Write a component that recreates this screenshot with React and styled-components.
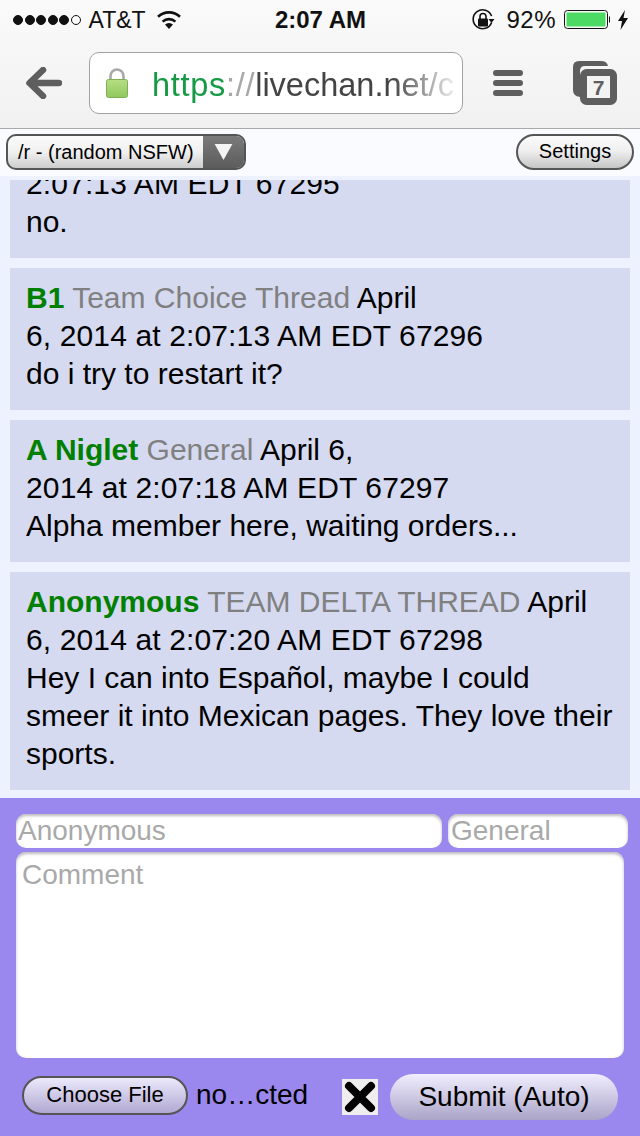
import React from "react";
import styled, { createGlobalStyle } from "styled-components";

const Global = createGlobalStyle`
  html, body { margin: 0; padding: 0; background: #eef2ff; }
  body { font-family: "Liberation Sans", Arial, sans-serif; color: #000; }
  * { box-sizing: border-box; }
`;
const Page = styled.div`
  width: 640px; height: 1136px; display: flex; flex-direction: column; overflow: hidden;
`;
const Chrome = styled.header`
  height: 129px; flex: none; background: linear-gradient(#fafafa, #f1f1f1);
  border-bottom: 1px solid #a9a9a9; display: flex; flex-direction: column;
`;
const StatusBar = styled.div`
  height: 40px; flex: none; display: grid; grid-template-columns: 1fr auto 1fr; align-items: center;
  padding: 0 12px 0 13px; font-size: 23px; color: #111;
`;
const StatusLeft = styled.div`display: flex; align-items: center;`;
const StatusRight = styled.div`display: flex; align-items: center; justify-content: flex-end;`;
const Dots = styled.div`display: flex; gap: 1.5px; margin-right: 8px;`;
const Dot = styled.span`
  width: 10px; height: 10px; border-radius: 50%; background: ${p => p.$on ? "#111" : "transparent"}; border: 1px solid #111;
`;
const Clock = styled.div`font-weight: 700; font-size: 24px;`;
const Percent = styled.span`font-size: 24px; letter-spacing: 0.5px; margin: 0 8px 0 11px;`;
const NavBar = styled.div`
  flex: 1; display: flex; align-items: center; padding: 0 23px 2px 26px;
`;
const UrlBox = styled.div`
  width: 374px; height: 62px; margin-left: 27px; margin-right: 30px; flex: none;
  background: #fff; border: 1px solid #a2a2a2; border-radius: 10px;
  display: flex; align-items: center; padding-left: 16px; overflow: hidden;
`;
const UrlText = styled.div`
  margin: 3px 0 0 24px; font-size: 32.5px; white-space: nowrap; color: #444;
  width: 308px; overflow: hidden; line-height: 40px;
  -webkit-mask-image: linear-gradient(to right, #000 78%, rgba(0,0,0,.1) 98%);
  mask-image: linear-gradient(to right, #000 78%, rgba(0,0,0,.1) 98%);
`;
const Scheme = styled.span`color: #169a45; letter-spacing: 0.7px;`;
const Slashes = styled.span`color: #a8a8a8; letter-spacing: 0.7px;`;
const TabSlot = styled.div`margin-left: 50px; display: flex; flex: none;`;
const TopBar = styled.div`
  height: 47px; flex: none; background: #f9fbff; display: flex; align-items: center;
  justify-content: space-between; padding: 0 6px 1px;
`;
const Select = styled.div`
  width: 240px; height: 36px; border: 2px solid #555; border-radius: 10px; display: flex; overflow: hidden;
  background: linear-gradient(#fbfbfb, #f0f0f0 50%, #cdcdcd);
  font-size: 20px;
`;
const SelectLabel = styled.div`flex: 1; padding-left: 10px; line-height: 32px; white-space: nowrap;`;
const SelectArrow = styled.div`
  width: 41px; display: flex; align-items: center; justify-content: center;
  background: linear-gradient(#7b7b7b, #5c5c5c);
`;
const SettingsBtn = styled.button`
  width: 118px; height: 36px; border: 2px solid #555; border-radius: 18px; padding: 0 0 2px;
  background: linear-gradient(#fbfbfb, #f0f0f0 45%, #c6c6c6); color: #000;
  font: 20px "Liberation Sans", Arial, sans-serif;
`;
const Chat = styled.main`
  flex: 1; min-height: 0; display: flex; background: #eef2ff; padding: 4px 10px 8px;
`;
const Scroller = styled.div`
  flex: 1; overflow: hidden; display: flex; flex-direction: column; justify-content: flex-end; gap: 10px;
`;
const Post = styled.article`
  flex: none; background: #d6daf0; padding: 11px 16px 17px; font-size: 30px; line-height: 38px;
`;
const Name = styled.b`color: #008000;`;
const Topic = styled.span`color: #808080;`;
const Stamp = styled.span`letter-spacing: 0.13px;`;
const Form = styled.form`
  height: 338px; flex: none; background: #9a88ee; padding: 16px 12px 0 16px; margin: 0;
  display: flex; flex-direction: column;
`;
const NameRow = styled.div`display: flex; gap: 6px;`;
const Field = styled.input`
  height: 34px; border: 0; outline: 0; border-radius: 10px; background: #fff; padding: 0 2px 0 ${p => p.$inset}px;
  font: 28px "Liberation Sans", Arial, sans-serif; box-shadow: inset 0 2px 3px #bbb;
  width: ${p => p.$w}px; flex: none; min-width: 0;
  &::placeholder { color: #a9a9a9; opacity: 1; }
`;
const Comment = styled.textarea`
  display: block; width: 608px; height: 206px; margin-top: 4px; border: 0; outline: 0; resize: none;
  border-radius: 10px; background: #fff; padding: 6px; box-shadow: inset 0 2px 3px #bbb;
  font: 28px/34px "Liberation Sans", Arial, sans-serif;
  &::placeholder { color: #a9a9a9; opacity: 1; }
`;
const Actions = styled.div`display: flex; align-items: center; margin-top: 16px; padding-left: 6px;`;
const ChooseFile = styled.button`
  width: 166px; height: 39px; border: 2px solid #555; border-radius: 20px; padding: 0; color: #000;
  margin-top: -4px;
  background: linear-gradient(#ece9fb, #b0a8d2); font: 22px "Liberation Sans", Arial, sans-serif;
`;
const FileName = styled.span`font-size: 28px; margin-left: 8px; width: 146px; margin-top: -4px;`;
const Check = styled.div`
  width: 36px; height: 36px; background: #eee; display: flex; align-items: center; justify-content: center; flex: none;
`;
const Submit = styled.button`
  width: 228px; height: 46px; margin-left: 12px; border: 0; border-radius: 23px; padding: 0; color: #000;
  background: linear-gradient(#f1eefe, #aaa4c8); font: 28px "Liberation Sans", Arial, sans-serif;
`;

const Wifi = () => (
  <svg width="26" height="20" viewBox="0 0 26 20" style={{ marginLeft: 10 }}>
    <path d="M13 19 L9 14.6 A6 6 0 0 1 17 14.6 Z" fill="#111" />
    <path d="M6.6 11.6 A9.6 9.6 0 0 1 19.4 11.6" fill="none" stroke="#111" strokeWidth="2.6" />
    <path d="M2 6.8 A16 16 0 0 1 24 6.8" fill="none" stroke="#111" strokeWidth="2.6" />
  </svg>
);
const RotationLock = () => (
  <svg width="24" height="24" viewBox="0 0 24 24">
    <path d="M20.6 14.5 A9.5 9.5 0 1 1 20.6 8" fill="none" stroke="#111" strokeWidth="1.6" />
    <path d="M17.5 11 L23.5 11 L20.5 15 Z" fill="#111" />
    <rect x="7" y="10.5" width="10" height="8" rx="1" fill="#111" />
    <path d="M9 11 V8.5 A3 3 0 0 1 15 8.5 V11" fill="none" stroke="#111" strokeWidth="1.6" />
  </svg>
);
const Battery = () => (
  <svg width="46" height="20" viewBox="0 0 46 20">
    <rect x="0.5" y="0.5" width="43" height="18" rx="3" fill="none" stroke="#111" />
    <rect x="2.5" y="2.5" width="39" height="14" rx="1" fill="#4cd964" />
    <path d="M45 6 L46 7 V12 L45 13 Z" fill="#111" />
  </svg>
);
const Bolt = () => (
  <svg width="10" height="20" viewBox="0 0 10 20" style={{ marginLeft: 8 }}>
    <path d="M7 0 L0 11 H4 L2.5 20 L10 8 H5.5 Z" fill="#111" />
  </svg>
);
const BackArrow = () => (
  <svg width="36" height="32" viewBox="0 0 36 32" style={{ flex: "none" }}>
    <path d="M17 3 L3.5 16 L17 29 M5 16 H33" fill="none" stroke="#5e5e5e" strokeWidth="6.5" strokeLinecap="round" strokeLinejoin="round" />
  </svg>
);
const Lock = () => (
  <svg width="22" height="30" viewBox="0 0 22 30" style={{ flex: "none" }}>
    <defs>
      <linearGradient id="lockg" x1="0" y1="0" x2="0" y2="1">
        <stop offset="0" stopColor="#b7de83" />
        <stop offset="1" stopColor="#8fc85e" />
      </linearGradient>
    </defs>
    <path d="M4.5 13 V8 A6.5 6.5 0 0 1 17.5 8 V13" fill="none" stroke="#a8a8a8" strokeWidth="2.6" />
    <rect x="0.5" y="11.5" width="21" height="18" rx="2" fill="url(#lockg)" stroke="#7fae55" />
  </svg>
);
const Menu = () => (
  <svg width="30" height="26" viewBox="0 0 30 26" style={{ flex: "none" }}>
    <rect x="0" y="0" width="30" height="6" rx="3" fill="#5e5e5e" />
    <rect x="0" y="10" width="30" height="6" rx="3" fill="#5e5e5e" />
    <rect x="0" y="20" width="30" height="6" rx="3" fill="#5e5e5e" />
  </svg>
);
const Tabs = () => (
  <svg width="44" height="44" viewBox="0 0 44 44">
    <path d="M7 36 Q0 35 0 29 V6 Q0 0 6 0 H28 Q34 0 35 5 H12 Q7 5 7 10 Z" fill="#5e5e5e" />
    <rect x="10.5" y="11.5" width="30" height="29" rx="3" fill="#f3f3f3" stroke="#5e5e5e" strokeWidth="7" />
    <text x="25.5" y="34" textAnchor="middle" fontSize="21" fontFamily="Liberation Sans, Arial, sans-serif" fontWeight="700" fill="#5e5e5e">7</text>
  </svg>
);
const Cross = () => (
  <svg width="36" height="36" viewBox="0 0 36 36">
    <path d="M7 7 L29 29 M29 7 L7 29" stroke="#000" strokeWidth="8" strokeLinecap="round" />
  </svg>
);

export default function App() {
  return (
    <Page>
      <Global />
      <Chrome>
        <StatusBar>
          <StatusLeft>
            <Dots>
              {[1, 1, 1, 1, 1, 0].map((on, i) => <Dot key={i} $on={!!on} />)}
            </Dots>
            AT&amp;T
            <Wifi />
          </StatusLeft>
          <Clock>2:07 AM</Clock>
          <StatusRight>
            <RotationLock />
            <Percent>92%</Percent>
            <Battery />
            <Bolt />
          </StatusRight>
        </StatusBar>
        <NavBar>
          <BackArrow />
          <UrlBox>
            <Lock />
            <UrlText><Scheme>https</Scheme><Slashes>://</Slashes>livechan.net/c</UrlText>
          </UrlBox>
          <Menu />
          <TabSlot><Tabs /></TabSlot>
        </NavBar>
      </Chrome>
      <TopBar>
        <Select>
          <SelectLabel>/r - (random NSFW)</SelectLabel>
          <SelectArrow>
            <svg width="19" height="16" viewBox="0 0 20 18"><path d="M0 0 H20 L10 18 Z" fill="#f4f4f4" /></svg>
          </SelectArrow>
        </Select>
        <SettingsBtn type="button">Settings</SettingsBtn>
      </TopBar>
      <Chat>
        <Scroller>
          <Post>April 6, 2014 at<br /><Stamp>2:07:13 AM EDT 67295</Stamp><br />no.</Post>
          <Post>
            <Name>B1</Name> <Topic>Team Choice Thread</Topic> April<br /><Stamp>6, 2014 at 2:07:13 AM EDT 67296</Stamp><br />
            do i try to restart it?
          </Post>
          <Post>
            <Name>A Niglet</Name> <Topic>General</Topic> April 6,<br /><Stamp>2014 at 2:07:18 AM EDT 67297</Stamp><br />
            Alpha member here, waiting orders...
          </Post>
          <Post>
            <Name>Anonymous</Name> <Topic>TEAM DELTA THREAD</Topic> April<br /><Stamp>6, 2014 at 2:07:20 AM EDT 67298</Stamp><br />
            Hey I can into Español, maybe I could smeer it into Mexican pages. They love their sports.
          </Post>
        </Scroller>
      </Chat>
      <Form>
        <NameRow>
          <Field $w={426} $inset={2} placeholder="Anonymous" />
          <Field $w={180} $inset={3} placeholder="General" />
        </NameRow>
        <Comment placeholder="Comment" />
        <Actions>
          <ChooseFile type="button">Choose File</ChooseFile>
          <FileName>no…cted</FileName>
          <Check><Cross /></Check>
          <Submit type="button">Submit (Auto)</Submit>
        </Actions>
      </Form>
    </Page>
  );
}
